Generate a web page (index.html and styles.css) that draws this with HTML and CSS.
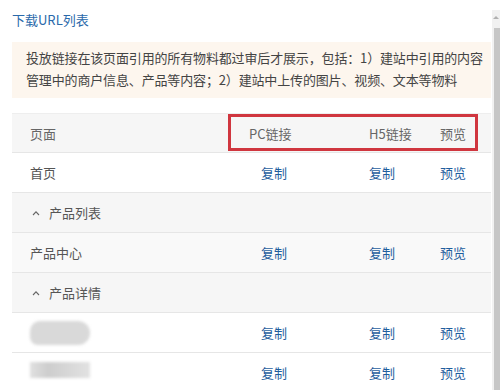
FILE: index.html
```html
<!DOCTYPE html>
<html lang="zh-CN">
<head>
<meta charset="utf-8">
<title>下载URL列表</title>
<link rel="stylesheet" href="styles.css">
</head>
<body>
<div class="frame">
  <div class="panel">
    <div class="title">下载URL列表</div>
    <div class="notice">投放链接在该页面引用的所有物料都过审后才展示，包括：1）建站中引用的内容<br>管理中的商户信息、产品等内容；2）建站中上传的图片、视频、文本等物料</div>
    <div class="table">
      <div class="row head">
        <div class="c-page">页面</div>
        <div class="c-pc">PC链接</div>
        <div class="c-h5">H5链接</div>
        <div class="c-pv">预览</div>
        <div class="mark"></div>
      </div>
      <div class="row">
        <div class="c-page">首页</div>
        <div class="c-pc link pcl">复制</div>
        <div class="c-h5 link">复制</div>
        <div class="c-pv link">预览</div>
      </div>
      <div class="row group">
        <div class="c-page"><svg class="chev" width="8" height="6" viewBox="0 0 8 6"><path d="M1 5 L4 1.8 L7 5" fill="none" stroke="#666" stroke-width="1.1"/></svg>产品列表</div>
      </div>
      <div class="row shade">
        <div class="c-page">产品中心</div>
        <div class="c-pc link pcl">复制</div>
        <div class="c-h5 link">复制</div>
        <div class="c-pv link">预览</div>
      </div>
      <div class="row group">
        <div class="c-page"><svg class="chev" width="8" height="6" viewBox="0 0 8 6"><path d="M1 5 L4 1.8 L7 5" fill="none" stroke="#666" stroke-width="1.1"/></svg>产品详情</div>
      </div>
      <div class="row">
        <div class="c-page"><span class="blur b1"></span></div>
        <div class="c-pc link pcl">复制</div>
        <div class="c-h5 link">复制</div>
        <div class="c-pv link">预览</div>
      </div>
      <div class="row">
        <div class="c-page"><span class="blur b2"></span></div>
        <div class="c-pc link pcl">复制</div>
        <div class="c-h5 link">复制</div>
        <div class="c-pv link">预览</div>
      </div>
    </div>
  </div>
  <div class="scrollbar">
    <div class="arrow"></div>
    <div class="thumb"></div>
  </div>
</div>
</body>
</html>
```

FILE: styles.css
```css
html, body {
  margin: 0;
  padding: 0;
  background: #fff;
  height: 390px;
  overflow: hidden;
}
body {
  font-family: "Noto Sans CJK SC", "Noto Sans", "Liberation Sans", sans-serif;
  font-size: 13px;
  color: #555;
}
.frame {
  display: flex;
  height: 390px;
  overflow: hidden;
}
.panel {
  width: 479px;
  padding-left: 12px;
  padding-right: 1px;
}
.title {
  margin-top: 10px;
  line-height: 20px;
  color: #2a69aa;
}
.notice {
  margin-top: 12px;
  background: #fdf6ee;
  color: #444;
  line-height: 22px;
  padding: 5px 0 7px 14px;
  white-space: nowrap;
  letter-spacing: -0.15px;
  overflow: hidden;
}
.table {
  margin-top: 15px;
}
.row {
  display: grid;
  grid-template-columns: 237px 120px 70px 52px;
  height: 39px;
  align-items: center;
  border-bottom: 1px solid #e6e6e6;
  position: relative;
}
.row.head {
  height: 38px;
  border-top: 1px solid #eeeeee;
  background: #f6f6f6;
  color: #666;
}
.row.group {
  background: #f6f6f6;
  grid-template-columns: 1fr;
}
.row.shade {
  background: #f9f9f9;
}
.c-page {
  padding-left: 18px;
  display: flex;
  align-items: center;
}
.chev {
  margin-left: 2px;
  margin-right: 9px;
}
.c-pv {
  padding-left: 1px;
}
.link {
  color: #1f5e9e;
}
.pcl {
  padding-left: 12px;
}
.blur {
  display: block;
  width: 60px;
  background: #d9d9d9;
  filter: blur(1.5px);
}
.b1 {
  height: 24px;
  border-radius: 10px 12px 12px 8px;
}
.b2 {
  height: 16px;
  margin-top: -6px;
  background: linear-gradient(90deg, #e0e0e0 0, #cdcdcd 30%, #d6d6d6 60%, #e2e2e2 100%);
}
.mark {
  position: absolute;
  left: 216px;
  top: 0;
  width: 244px;
  height: 31px;
  border: 3px solid #d0363f;
}
.scrollbar {
  width: 8px;
  margin-top: 10px;
  background: #f1f1f1;
  display: flex;
  flex-direction: column;
  align-items: center;
}
.arrow {
  margin-top: 6px;
  width: 0;
  height: 0;
  border-left: 3px solid transparent;
  border-right: 3px solid transparent;
  border-bottom: 3px solid #b0b0b0;
}
.thumb {
  margin-top: 9px;
  width: 6px;
  margin-left: 2px;
  flex: 1;
  background: #c6c6c6;
}
```
